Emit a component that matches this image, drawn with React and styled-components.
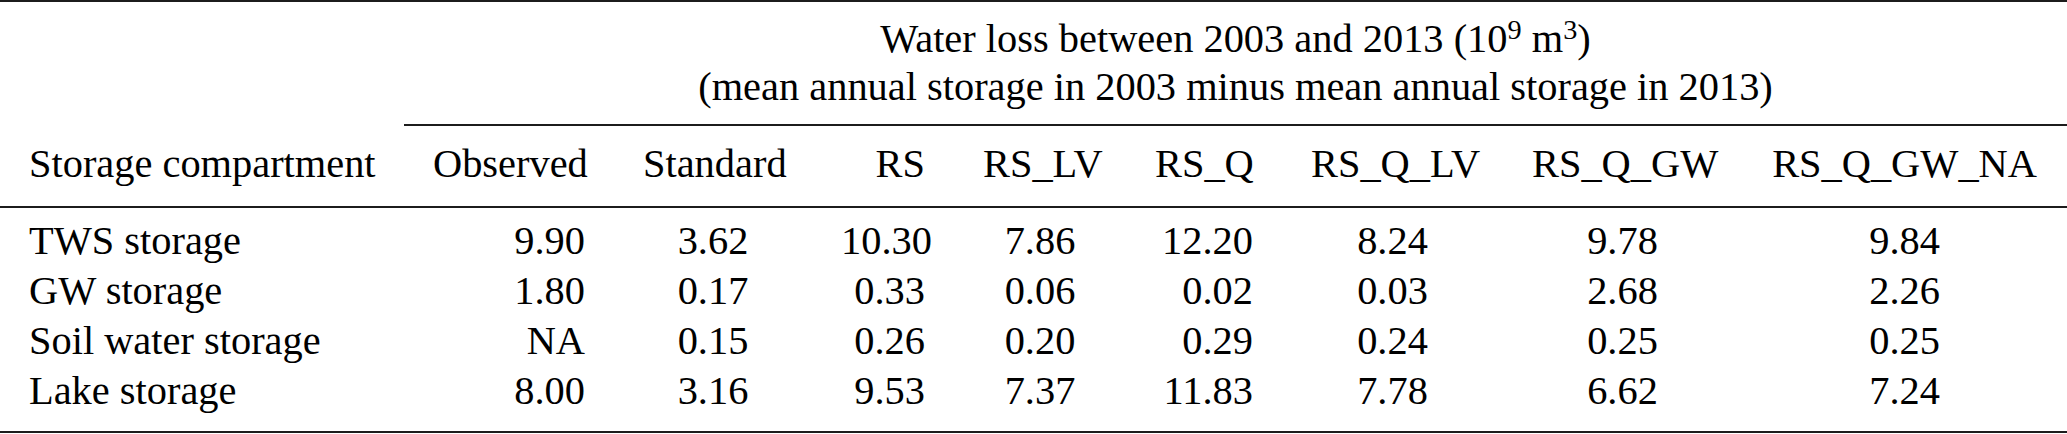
import React from "react";
import styled, { createGlobalStyle } from "styled-components";

const Global = createGlobalStyle`
  html, body { margin: 0; padding: 0; background: #ffffff; }
  body { font-family: "Liberation Serif", "Times New Roman", serif; color: #000; }
`;

const RULE = "#1c1c1c";
const SERIF = `"Liberation Serif", "Times New Roman", serif`;

const Table = styled.table`
  width: 2067px;
  table-layout: fixed;
  border-collapse: separate;
  border-spacing: 0;
  font-family: ${SERIF};
  font-size: 40.4px;
  color: #000;

  th, td {
    font-family: ${SERIF};
    font-size: 40.4px;
  }
`;

const Col = styled.col`
  width: ${(p) => p.$w}px;
`;

const TopRow = styled.tr`
  & > th {
    border-top: 2px solid ${RULE};
  }
`;

const EmptyHead = styled.th`
  padding: 0;
`;

const SpanHead = styled.th`
  font-weight: normal;
  text-align: center;
  padding: 13px 29px 13px;
  line-height: 48px;
  border-bottom: 2px solid ${RULE};
  white-space: nowrap;
`;

const HeadLine = styled.div`
  display: block;
`;

const Sup = styled.sup`
  font-size: 0.7em;
  line-height: 0;
  vertical-align: 0.45em;
`;

const ColHead = styled.th`
  font-weight: normal;
  text-align: ${(p) => p.$align || "left"};
  padding: 14px 29px 18px;
  line-height: 48px;
  border-bottom: 2px solid ${RULE};
  white-space: nowrap;
`;

const BodyRow = styled.tr`
  &:first-child > td {
    padding-top: 8px;
  }
  &:last-child > td {
    padding-bottom: 15px;
    border-bottom: 2px solid ${RULE};
  }
`;

const Cell = styled.td`
  text-align: ${(p) => p.$align || "left"};
  padding: 0 29px;
  line-height: 50px;
  white-space: nowrap;
`;

const widths = [404, 210, 198, 142, 172, 156, 221, 239, 325];
const aligns = ["left", "right", "center", "right", "center", "right", "center", "center", "center"];
const heads = [
  "Storage compartment",
  "Observed",
  "Standard",
  "RS",
  "RS_LV",
  "RS_Q",
  "RS_Q_LV",
  "RS_Q_GW",
  "RS_Q_GW_NA",
];
const rows = [
  ["TWS storage", "9.90", "3.62", "10.30", "7.86", "12.20", "8.24", "9.78", "9.84"],
  ["GW storage", "1.80", "0.17", "0.33", "0.06", "0.02", "0.03", "2.68", "2.26"],
  ["Soil water storage", "NA", "0.15", "0.26", "0.20", "0.29", "0.24", "0.25", "0.25"],
  ["Lake storage", "8.00", "3.16", "9.53", "7.37", "11.83", "7.78", "6.62", "7.24"],
];

export default function App() {
  return (
    <>
      <Global />
      <Table>
        <colgroup>
          {widths.map((w, i) => (
            <Col key={i} $w={w} />
          ))}
        </colgroup>
        <thead>
          <TopRow>
            <EmptyHead />
            <SpanHead colSpan={8}>
              <HeadLine>
                Water loss between 2003 and 2013 (10<Sup>9</Sup> m<Sup>3</Sup>)
              </HeadLine>
              <HeadLine>
                (mean annual storage in 2003 minus mean annual storage in 2013)
              </HeadLine>
            </SpanHead>
          </TopRow>
          <tr>
            {heads.map((h, i) => (
              <ColHead key={h} $align={aligns[i]}>
                {h}
              </ColHead>
            ))}
          </tr>
        </thead>
        <tbody>
          {rows.map((r) => (
            <BodyRow key={r[0]}>
              {r.map((v, i) => (
                <Cell key={i} $align={aligns[i]}>
                  {v}
                </Cell>
              ))}
            </BodyRow>
          ))}
        </tbody>
      </Table>
    </>
  );
}
